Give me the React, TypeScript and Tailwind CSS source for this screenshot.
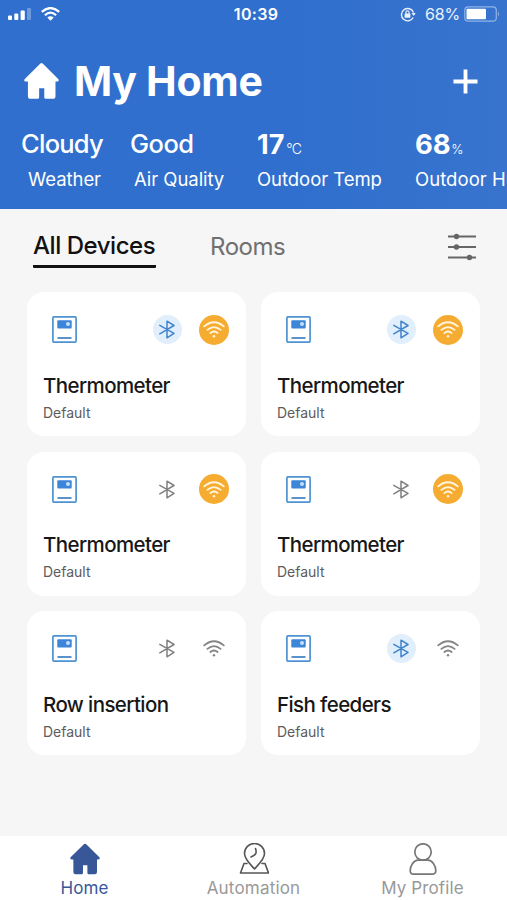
type Device = {
    name: string;
    bluetooth: boolean;
    wifi: boolean;
};

const devices: Device[] = [
    { name: "Thermometer", bluetooth: true, wifi: true },
    { name: "Thermometer", bluetooth: true, wifi: true },
    { name: "Thermometer", bluetooth: false, wifi: true },
    { name: "Thermometer", bluetooth: false, wifi: true },
    { name: "Row insertion", bluetooth: false, wifi: false },
    { name: "Fish feeders", bluetooth: true, wifi: false },
];

function HomeIcon({ className }: { className: string }) {
    return (
        <svg className={className} viewBox="0 0 34 35" fill="currentColor">
            <path d="M15.7.7a2 2 0 0 1 2.7 0L33 15.2c1.4 1.4.8 2.9-1 2.9h-1.4v14.2a2.5 2.5 0 0 1-2.5 2.5h-6.9a1.5 1.5 0 0 1-1.5-1.5V24.5h-5v8.8a1.5 1.5 0 0 1-1.5 1.5H6.3a2.5 2.5 0 0 1-2.5-2.5V18.1H2c-1.8 0-2.4-1.5-1-2.9Z" />
        </svg>
    );
}

function WifiIcon({ className }: { className: string }) {
    return (
        <svg className={className} viewBox="0 0 22 17" fill="none" stroke="currentColor" strokeWidth="1.8" strokeLinecap="round">
            <path d="M1.2 5.4Q11-2.8 20.8 5.4M4.4 8.9Q11 3.4 17.6 8.9M7.4 12Q11 9.1 14.6 12" />
            <circle cx="11" cy="15.2" r="1.2" fill="currentColor" stroke="none" />
        </svg>
    );
}

function BluetoothIcon({ className }: { className: string }) {
    return (
        <svg className={className} viewBox="0 0 16 19" fill="none" stroke="currentColor" strokeWidth="1.5" strokeLinejoin="round" strokeLinecap="round">
            <path d="M.8 5.3L15 13.3L8 17.8V1.2L15 5.5L.8 13.8" />
        </svg>
    );
}

function DeviceIcon() {
    return (
        <svg className="h-[27px] w-[25px]" viewBox="0 0 25 27" fill="none">
            <rect x=".9" y=".8" width="23.2" height="25.4" rx="1.2" stroke="#4f93d2" strokeWidth="1.7" />
            <rect x="5.3" y="4.3" width="14.4" height="8.2" rx="1" fill="#3d85d8" />
            <circle cx="16" cy="8" r="2" fill="#c5e0fa" />
            <path d="M5.5 22h14" stroke="#3d7fc0" strokeWidth="1.7" />
        </svg>
    );
}

function StatusBar() {
    return (
        <div className="grid h-7 grid-cols-3 items-center pl-2 pr-[7px] text-white">
            <div className="flex items-center gap-[10px]">
                <svg className="h-3 w-[23px]" viewBox="0 0 23 12" fill="currentColor">
                    <rect x="0" y="7.5" width="4" height="4.5" rx="1" />
                    <rect x="6.3" y="5.5" width="4" height="6.5" rx="1" />
                    <rect x="12.6" y="2.5" width="4.2" height="9.5" rx="1" />
                    <rect x="19" y="0" width="4" height="12" rx="1" opacity=".3" />
                </svg>
                <svg className="h-[14px] w-[19px]" viewBox="0 0 19 14" fill="none" stroke="currentColor" strokeWidth="2.2">
                    <path d="M.8 4.9Q9.5-2.8 18.2 4.9M3.9 8.2Q9.5 3.2 15.1 8.2" />
                    <path d="M6.3 10.5Q9.5 7.9 12.7 10.5L9.5 13.8Z" fill="currentColor" stroke="none" />
                </svg>
            </div>
            <span className="pl-1 text-center text-[16px] font-semibold tracking-[0.3px]">10:39</span>
            <div className="flex items-center justify-end text-white/90">
                <svg className="mr-[9px] h-[15px] w-[16px]" viewBox="0 0 16 15" fill="none" stroke="currentColor" strokeWidth="1.4">
                    <path d="M13.2 10.5A6.2 6.2 0 1 1 13.5 5.5" />
                    <path d="M11.5 6h4.2l-2 3z" fill="currentColor" stroke="none" />
                    <rect x="4.6" y="6.5" width="5.8" height="4.3" rx=".5" fill="currentColor" stroke="none" />
                    <path d="M5.9 7V5.5a1.6 1.6 0 0 1 3.2 0V7" strokeWidth="1.1" />
                </svg>
                <span className="text-[16px] tracking-[-0.2px]">68%</span>
                <svg className="ml-1 h-4 w-9" viewBox="0 0 36 16" fill="none">
                    <rect x=".8" y=".8" width="31.5" height="14.4" rx="3.5" stroke="#90b5e8" strokeWidth="1.2" />
                    <rect x="2.5" y="2.7" width="19.5" height="10.6" rx="1" fill="#fff" />
                    <path d="M34 5.5q2 2.5 0 5z" fill="#90b5e8" />
                </svg>
            </div>
        </div>
    );
}

function Header() {
    return (
        <header className="h-[209px] overflow-hidden bg-linear-to-r from-[#306fcd] from-60% to-[#3874ce] text-white">
            <StatusBar />
            <div className="mt-[27px] flex h-[52px] items-center pl-6 pr-[29px]">
                <HomeIcon className="h-[36px] w-[35px]" />
                <h1 className="ml-[15px] text-[41px] leading-none font-bold tracking-[-0.3px]">My Home</h1>
                <svg className="ml-auto size-[25px]" viewBox="0 0 26 26" stroke="currentColor" strokeWidth="4">
                    <path d="M13 .5v25M.5 13h25" />
                </svg>
            </div>
            <div className="mt-5 flex whitespace-nowrap">
                <div className="w-[110px] shrink-0 pl-[21px]">
                    <div className="h-[34px] text-[25.5px] leading-[34px] font-medium tracking-[-0.75px]">Cloudy</div>
                    <div className="mt-[6px] pl-[7px] text-[18.5px] leading-6 tracking-[-0.05px]">Weather</div>
                </div>
                <div className="ml-5 w-[127px] shrink-0">
                    <div className="h-[34px] text-[25.5px] leading-[34px] font-medium tracking-[-0.5px]">Good</div>
                    <div className="mt-[6px] pl-[4px] text-[18.5px] leading-6 tracking-[-0.05px]">Air Quality</div>
                </div>
                <div className="w-[158px] shrink-0">
                    <div className="h-[34px] text-[27px] leading-[35px] font-bold">17<span className="ml-[2px] text-[14px] font-light tracking-[-0.8px]">°C</span></div>
                    <div className="mt-[6px] text-[18.5px] leading-6 tracking-[-0.05px]">Outdoor Temp</div>
                </div>
                <div className="shrink-0">
                    <div className="h-[34px] text-[27.5px] leading-[34px] font-bold tracking-[-0.2px]">68<span className="ml-[1px] text-[13px] font-light">%</span></div>
                    <div className="mt-[6px] text-[18.5px] leading-6 tracking-[0.05px]">Outdoor Humidity</div>
                </div>
            </div>
        </header>
    );
}

function Tabs() {
    return (
        <div className="flex h-[83px] items-start pl-[33px] pr-[31px] pt-[20px]">
            <button className="h-[39px] w-[123px] rounded-[1px] border-b-3 border-[#111] pb-[3px] text-left text-[24px] leading-[33px] font-medium tracking-[-0.45px] whitespace-nowrap text-[#111]">All Devices</button>
            <button className="ml-[54px] text-[24px] leading-[36px] tracking-[-0.45px] text-[#707070]">Rooms</button>
            <svg className="ml-auto mt-[4px] h-7 w-7" viewBox="0 0 28 28" fill="#666" stroke="#666" strokeWidth="2">
                <path d="M0 3.5h28M0 14h28M0 24.5h28" />
                <circle cx="8.5" cy="3.5" r="1.7" />
                <circle cx="8.5" cy="14" r="1.7" />
                <circle cx="21.5" cy="24.5" r="1.7" />
            </svg>
        </div>
    );
}

function DeviceCard({ device }: { device: Device }) {
    return (
        <div className="h-[144px] rounded-[17px] bg-white">
            <div className="flex items-center pl-[25px] pr-[17.5px] pt-[22.5px]">
                <DeviceIcon />
                <div className={`ml-auto flex size-[29px] items-center justify-center rounded-full ${device.bluetooth ? "bg-[#e1eefb] text-[#4185ce]" : "text-[#808080]"}`}>
                    <BluetoothIcon className="mr-[1px] h-[19px] w-4" />
                </div>
                <div className={`ml-[17px] flex size-[30px] items-center justify-center rounded-full ${device.wifi ? "bg-[#f5ac30] text-[#fff6df]" : "text-[#858585]"}`}>
                    <WifiIcon className="h-[17px] w-[22px]" />
                </div>
            </div>
            <div className="pl-4">
                <div className="mt-[26px] text-[20.5px] leading-[30px] font-medium tracking-[-0.6px] whitespace-nowrap text-[#171717]">{device.name}</div>
                <div className="mt-[2px] text-[14px] leading-5 text-[#5c5c5c]">Default</div>
            </div>
        </div>
    );
}

function BottomNav() {
    return (
        <nav className="grid h-16 grid-cols-3 bg-white text-[17px] leading-5 text-[#999]">
            <div className="flex flex-col items-center pt-[7px] text-[#385799]">
                <HomeIcon className="h-8 w-[30px]" />
                <span className="mt-[3px] tracking-[0.1px]">Home</span>
            </div>
            <div className="flex flex-col items-center pt-[7px]">
                <svg className="h-8 w-[30px]" viewBox="0 0 30 32" fill="none" stroke="#555" strokeWidth="1.6" strokeLinejoin="round" strokeLinecap="round">
                    <path d="M15.5 26C13 23 5.5 16.5 5.5 10.5a10 10 0 0 1 20 0C25.5 16.5 18 23 15.5 26Z" />
                    <path d="M16.5 5.5c1.5 4.5.5 6.5-4.5 8.5M8 20.5H5L1.500 30h28L26 20.500h-3" />
                </svg>
                <span className="mt-[3px] tracking-[0.2px]">Automation</span>
            </div>
            <div className="flex flex-col items-center pt-[7px]">
                <svg className="h-8 w-7" viewBox="0 0 28 32" fill="none" stroke="#777" strokeWidth="1.7">
                    <circle cx="14" cy="9" r="8.2" />
                    <path d="M9 17.2h10c4 0 7.8 5.5 7.8 10.3 0 2.5-1.3 3.7-3.8 3.7H5c-2.5 0-3.8-1.2-3.8-3.7C1.2 22.7 5 17.2 9 17.2Z" />
                </svg>
                <span className="mt-[3px] tracking-[0.1px]">My Profile</span>
            </div>
        </nav>
    );
}

export default function App() {
    return (
        <div className="flex h-[900px] w-[507px] flex-col overflow-hidden bg-[#f6f6f6] font-['Inter',sans-serif]">
            <Header />
            <Tabs />
            <main className="grid flex-1 grid-cols-[219px_219px] content-start gap-x-[15px] gap-y-[15.5px] pl-[27px]">
                {devices.map((device, index) => (
                    <DeviceCard key={index} device={device} />
                ))}
            </main>
            <BottomNav />
        </div>
    );
}
